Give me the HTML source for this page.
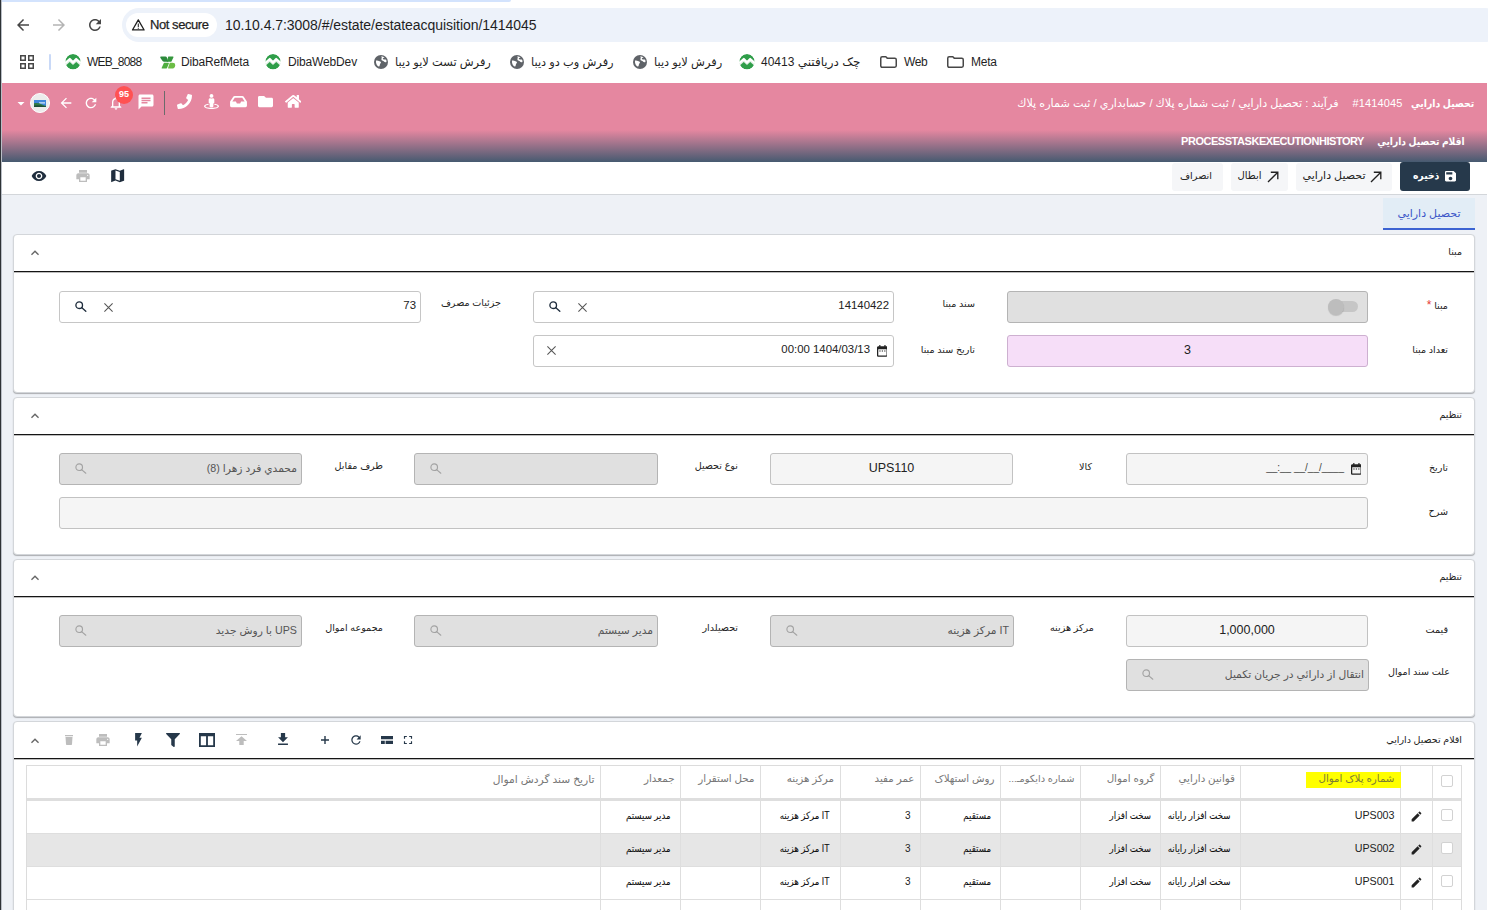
<!DOCTYPE html>
<html lang="fa">
<head>
<meta charset="utf-8">
<title>تحصيل دارايي</title>
<style>
*{box-sizing:border-box;margin:0;padding:0}
html,body{width:1488px;height:910px;overflow:hidden;background:#fff}
body{position:relative;font-family:"Liberation Sans","DejaVu Sans",sans-serif;font-size:11px;color:#222}
.abs{position:absolute}
svg{display:block}
/* ---------- browser chrome ---------- */
#winedge{left:0;top:0;width:2px;height:910px;background:linear-gradient(90deg,#2e3236 0,#2e3236 55%,#b9bec6 55%,#b9bec6 100%);z-index:50}
#tabstrip{left:2px;top:0;width:509px;height:2px;background:#d3e3fd;border-radius:0 0 10px 0}
#urlbar{left:122px;top:8px;width:1380px;height:34px;background:#edf2fa;border-radius:17px}
#chip{left:126px;top:13px;width:90.500px;height:24px;background:#fff;border-radius:12px}
#chip span{position:absolute;left:24px;top:4px;font-size:13px;color:#1f1f1f;letter-spacing:-.44px;white-space:nowrap;-webkit-text-stroke:.25px #1f1f1f}
#url{left:225px;top:17px;font-size:14px;color:#1f1f1f;white-space:nowrap;letter-spacing:-.045px}
.bm{top:54px;font-size:12px;color:#1f1f1f;white-space:nowrap;height:16px;line-height:16px}
.bm.fa{font-size:11.4px;direction:rtl}
/* ---------- app header ---------- */
#hdr{left:2px;top:83px;width:1485px;height:79px;background:linear-gradient(#e587a0 0,#e587a0 47px,#465a70 79px)}
.ht{color:#fff;white-space:nowrap;direction:rtl}
/* ---------- toolbar ---------- */
#tbar{left:2px;top:162px;width:1485px;height:33px;background:#fff;border-bottom:1px solid #d3d6da;box-shadow:0 1px 0 #e2e5e9}
#main{left:2px;top:195px;width:1485px;height:715px;background:#eef1f6}
.btn{top:163px;height:28px;border-radius:3px;background:#f5f6f8;color:#222;font-size:11px;white-space:nowrap;direction:rtl;display:flex;align-items:center;justify-content:center;gap:5px;padding-right:3px}

.btn span{position:relative;top:-2px}
/* ---------- main ---------- */
#tab{left:1383px;top:198px;width:92px;height:32px;background:linear-gradient(#e2edf6 0,#e2edf6 30px,#8fa7e3 30px,#8fa7e3 30.500px,#3b63d2 30.500px,#3b63d2 32px);color:#3b55c8;font-size:11px;direction:rtl;text-align:center;line-height:30px;white-space:nowrap}
.card{left:13px;width:1462px;background:#fff;border:1px solid #d3d6da;border-radius:4px;box-shadow:0 1px 1px rgba(0,0,0,.28)}
.card i{position:absolute;left:0;right:0;top:36px;height:2px;background:linear-gradient(#151515 0,#151515 50%,rgba(17,17,17,.28) 50%,rgba(17,17,17,.28) 100%)}
.ct{right:26px;font-size:9.500px;color:#222;direction:rtl;white-space:nowrap;line-height:14px}
.lb{font-size:9.600px;color:#222;direction:rtl;white-space:nowrap;line-height:14px;text-align:right}
.inp{height:32px;border:1px solid #c6c6c6;border-radius:3px;background:#fff;font-size:11.400px;color:#222;white-space:nowrap;line-height:27px}
.dis{background:#e0e0e0;border-color:#b4b4b4;color:#555;direction:rtl;text-align:right;padding-right:4px;font-size:10.700px;line-height:28px}
.ro{background:#f5f5f5;border-color:#c2c2c2}
.pink{background:#f6def8;border-color:#cdb0d0}
.ctr{text-align:center;line-height:29.500px}
.rt{text-align:right;padding-right:4px}

/* ---------- grid ---------- */
#grid{left:26px;top:765px;width:1436px;height:160px;border:1px solid #dcdcdc;background:#fff;overflow:hidden}
.hrow{left:0;top:0;width:1436px;height:32px}
.hb{left:0;top:32px;width:1436px;height:3px;background:#dedede}
.row{left:0;width:1436px;height:34px;border-bottom:1px solid #dedede}
.alt{background:#e6e6e6}
.vl{top:0;width:1px;height:160px;background:#dedede}
.th{font-size:10.300px;color:#777;direction:rtl;white-space:nowrap;line-height:14px;top:772px}
.td{font-size:10px;color:#111;direction:rtl;white-space:nowrap;line-height:14px;transform:scaleX(.866);transform-origin:100% 50%;-webkit-text-stroke:.08px #111}
.tdl{font-size:10.700px;color:#222;white-space:nowrap;line-height:14px}
.cb{width:12px;height:12px;border:1px solid #d2d2d2;border-radius:2px;background:#fff;left:1441px}
</style>
</head>
<body>
<div class="abs" id="tabstrip"></div>
<div class="abs" id="urlbar"></div>
<div class="abs" id="chip"><span>Not secure</span></div>
<div class="abs" id="url">10.10.4.7:3008/#/estate/estateacquisition/1414045</div>


<!-- nav icons -->
<svg class="abs" style="left:14px;top:16px" width="18" height="18" viewBox="0 0 24 24"><path fill="#474747" d="M20 11H7.830l5.590-5.590L12 4l-8 8 8 8 1.410-1.410L7.830 13H20v-2z"/></svg>
<svg class="abs" style="left:50px;top:16px" width="18" height="18" viewBox="0 0 24 24"><path fill="#b4b4b4" d="M4 11h12.170l-5.590-5.590L12 4l8 8-8 8-1.410-1.410L16.170 13H4v-2z"/></svg>
<svg class="abs" style="left:86px;top:16px" width="18" height="18" viewBox="0 0 24 24"><path fill="#474747" d="M17.650 6.350C16.200 4.900 14.210 4 12 4c-4.420 0-7.990 3.580-7.990 8s3.570 8 7.990 8c3.730 0 6.840-2.550 7.730-6h-2.080c-.82 2.330-3.040 4-5.650 4-3.310 0-6-2.690-6-6s2.690-6 6-6c1.660 0 3.140.69 4.220 1.780L13 11h7V4l-2.350 2.350z"/></svg>
<svg class="abs" style="left:130.700px;top:18.300px" width="14.600" height="13.700" viewBox="0 0 17 16"><path fill="none" stroke="#1f1f1f" stroke-width="1.500" stroke-linejoin="round" d="M8.500 2.200L15.300 14H1.700z"/><path fill="#1f1f1f" d="M7.900 6.500h1.200v4H7.900zM7.900 11.300h1.200v1.300H7.900z"/></svg>
<!-- apps grid -->
<svg class="abs" style="left:20px;top:55px" width="14" height="14" viewBox="0 0 14 14" fill="none" stroke="#474747" stroke-width="1.500"><rect x=".75" y=".75" width="4.500" height="4.500"/><rect x="8.750" y=".75" width="4.500" height="4.500"/><rect x=".75" y="8.750" width="4.500" height="4.500"/><rect x="8.750" y="8.750" width="4.500" height="4.500"/></svg>
<div class="abs" style="left:49px;top:54px;width:2px;height:16px;background:#c9d9f7;border-radius:1px"></div>
<svg class="abs" style="left:65px;top:54px" width="16" height="16" viewBox="0 0 16 16"><circle cx="8" cy="7.800" r="7.700" fill="#2f9e49"/><path d="M.6 10.600L4.800 6.900 8 10l3.200-3.100 4.200 3.700" fill="none" stroke="#dfeee2" stroke-width="1.600" stroke-linejoin="round"/><path d="M.3 9L4.800 5 8 8.200 11.200 5l4.500 4" fill="none" stroke="#fff" stroke-width="2.300" stroke-linejoin="round"/><circle cx="8" cy="7.800" r="8.300" fill="none" stroke="#fff" stroke-width="1.200"/></svg>
<svg class="abs" style="left:265px;top:54px" width="16" height="16" viewBox="0 0 16 16"><circle cx="8" cy="7.800" r="7.700" fill="#2f9e49"/><path d="M.6 10.600L4.800 6.900 8 10l3.200-3.100 4.200 3.700" fill="none" stroke="#dfeee2" stroke-width="1.600" stroke-linejoin="round"/><path d="M.3 9L4.800 5 8 8.200 11.200 5l4.500 4" fill="none" stroke="#fff" stroke-width="2.300" stroke-linejoin="round"/><circle cx="8" cy="7.800" r="8.300" fill="none" stroke="#fff" stroke-width="1.200"/></svg>
<svg class="abs" style="left:739px;top:54px" width="16" height="16" viewBox="0 0 16 16"><circle cx="8" cy="7.800" r="7.700" fill="#2f9e49"/><path d="M.6 10.600L4.800 6.900 8 10l3.200-3.100 4.200 3.700" fill="none" stroke="#dfeee2" stroke-width="1.600" stroke-linejoin="round"/><path d="M.3 9L4.800 5 8 8.200 11.200 5l4.500 4" fill="none" stroke="#fff" stroke-width="2.300" stroke-linejoin="round"/><circle cx="8" cy="7.800" r="8.300" fill="none" stroke="#fff" stroke-width="1.200"/></svg>
<svg class="abs" style="left:158.500px;top:55.500px" width="17" height="13" viewBox="0 0 17 13"><path fill="#2c8a3c" d="M2.200.500h4.300q1 0 1.400 1l1.400 4.300H5.200q-1.300 0-2-1.200L1.300 1.800Q.8.500 2.200.500z"/><path fill="#35973d" d="M9.300.500h4.600q.9 0 .5.900L12.300 5.800H8.400q-.9 0-.5-.9z"/><path fill="#4fae40" d="M5 6.800h4.300q.9 0 .5.900L8 11.900q-.3.700-1.100.700H3.300q-.9 0-.6-.9z"/><path fill="#6cbd45" d="M10.800 6.800h2.700q2.700 0 2.700 2.400 0 3.400-3.700 3.400H9.700q-.9 0-.6-.9z"/></svg>
<svg class="abs" style="left:374px;top:55px" width="14" height="14" viewBox="0 0 24 24"><circle cx="12" cy="12" r="12" fill="#5f6368"/><path fill="#fff" d="M3.500 9.500c1.500-.5 3.500-.3 5 .8 1.300 1 3 .6 3.400 2 .4 1.500-1.400 2.200-1.700 3.600-.3 1.300-.4 3.600-1.600 3.800C6.500 20 4.800 17 4 15c-.6-1.700-.9-3.500-.5-5.500zM12 2.600c1.600-.4 4.400.3 6 1.700-1 .4-2 .3-2.700 1.300-.6.900.4 2 1.500 2.200 1.300.2 2.800-.6 3.900.4.700.7.800 2.400.6 3.800-1.600.7-3.600.2-4.600-1.300-.7-1.100-2.500-.6-3.500-1.700-1.100-1.200-.3-3 .2-4.200.2-.6-.9-1.500-1.400-2.200z"/></svg>
<svg class="abs" style="left:510px;top:55px" width="14" height="14" viewBox="0 0 24 24"><circle cx="12" cy="12" r="12" fill="#5f6368"/><path fill="#fff" d="M3.500 9.500c1.500-.5 3.500-.3 5 .8 1.300 1 3 .6 3.400 2 .4 1.500-1.400 2.200-1.700 3.600-.3 1.300-.4 3.600-1.600 3.800C6.500 20 4.800 17 4 15c-.6-1.700-.9-3.500-.5-5.500zM12 2.600c1.600-.4 4.400.3 6 1.700-1 .4-2 .3-2.700 1.300-.6.900.4 2 1.500 2.200 1.300.2 2.800-.6 3.900.4.700.7.800 2.400.6 3.800-1.600.7-3.600.2-4.600-1.300-.7-1.100-2.500-.6-3.500-1.700-1.100-1.200-.3-3 .2-4.200.2-.6-.9-1.500-1.400-2.200z"/></svg>
<svg class="abs" style="left:633px;top:55px" width="14" height="14" viewBox="0 0 24 24"><circle cx="12" cy="12" r="12" fill="#5f6368"/><path fill="#fff" d="M3.500 9.500c1.500-.5 3.500-.3 5 .8 1.300 1 3 .6 3.400 2 .4 1.500-1.400 2.200-1.700 3.600-.3 1.300-.4 3.600-1.600 3.800C6.500 20 4.800 17 4 15c-.6-1.700-.9-3.500-.5-5.500zM12 2.600c1.600-.4 4.400.3 6 1.700-1 .4-2 .3-2.700 1.300-.6.900.4 2 1.500 2.200 1.300.2 2.800-.6 3.900.4.700.7.800 2.400.6 3.800-1.600.7-3.600.2-4.600-1.300-.7-1.100-2.500-.6-3.500-1.700-1.100-1.200-.3-3 .2-4.200.2-.6-.9-1.500-1.400-2.200z"/></svg>
<svg class="abs" style="left:880px;top:56px" width="17" height="12" viewBox="0 0 17 12"><path fill="none" stroke="#474747" stroke-width="1.500" stroke-linejoin="round" d="M.75 2.200c0-.8.600-1.450 1.400-1.450h3.700l1.600 1.600h7.400c.8 0 1.400.6 1.400 1.400v6.100c0 .8-.6 1.400-1.400 1.400H2.150c-.8 0-1.400-.6-1.400-1.400z"/></svg>
<svg class="abs" style="left:947px;top:56px" width="17" height="12" viewBox="0 0 17 12"><path fill="none" stroke="#474747" stroke-width="1.500" stroke-linejoin="round" d="M.75 2.200c0-.8.600-1.450 1.400-1.450h3.700l1.600 1.600h7.400c.8 0 1.400.6 1.400 1.400v6.100c0 .8-.6 1.400-1.400 1.400H2.150c-.8 0-1.400-.6-1.400-1.400z"/></svg>
<!-- bookmarks -->
<div class="abs bm" style="left:87px;letter-spacing:-.79px">WEB_8088</div>
<div class="abs bm" style="left:181px;letter-spacing:-.19px">DibaRefMeta</div>
<div class="abs bm" style="left:288px;letter-spacing:-.15px">DibaWebDev</div>
<div class="abs bm fa" style="left:395px">رفرش تست لايو ديبا</div>
<div class="abs bm fa" style="left:531px">رفرش وب دو ديبا</div>
<div class="abs bm fa" style="left:654px">رفرش لايو ديبا</div>
<div class="abs bm fa" style="left:761px;font-size:12px">چک دريافتني 40413</div>
<div class="abs bm" style="left:904px;letter-spacing:-.42px">Web</div>
<div class="abs bm" style="left:971px;letter-spacing:-.27px">Meta</div>


<div class="abs" id="hdr"></div>
<!-- header right texts -->
<div class="abs ht" style="right:14px;top:96px;font-size:10.600px;font-weight:bold;line-height:14px;transform:scaleX(.877);transform-origin:100% 50%">تحصيل دارايي</div>
<div class="abs ht" style="right:85.500px;top:96px;font-size:11px;line-height:14px;direction:ltr;letter-spacing:.12px">#1414045</div>
<div class="abs ht" style="right:149.500px;top:96px;font-size:11.200px;line-height:14px">فرآيند : تحصيل دارايي / ثبت شماره پلاك / حسابداري / ثبت شماره پلاك</div>
<div class="abs ht" style="right:23px;top:134px;font-size:10.600px;font-weight:bold;line-height:14px;transform:scaleX(.86);transform-origin:100% 50%">اقلام تحصيل دارايي</div>
<div class="abs ht" style="right:124px;top:134px;font-size:11px;font-weight:bold;line-height:14px;direction:ltr;letter-spacing:-.46px">PROCESSTASKEXECUTIONHISTORY</div>
<!-- header left icons -->
<svg class="abs" style="left:15px;top:98px" width="12" height="12" viewBox="0 0 24 24"><path fill="#fff" d="M5 8l7 7 7-7z"/></svg>
<div class="abs" style="left:30px;top:93px;width:20px;height:20px;border-radius:50%;background:#ececec;border:1px solid #fff;overflow:hidden"><svg style="position:absolute;left:3px;top:5.500px" width="12" height="7" viewBox="0 0 12 7"><rect width="12" height="7" fill="#3f86dc"/><path fill="#cfe3f7" d="M5 2.200h6v1.400H5z"/><path fill="#2f7a45" d="M0 3.200Q4 2.500 8 4.500T12 5.500V7H0z"/><path fill="#1d4f3a" d="M0 5.500Q5 4.800 12 6.500V7H0z"/></svg></div>
<svg class="abs" style="left:58px;top:95px" width="16" height="16" viewBox="0 0 24 24"><path fill="#fff" d="M20 11H7.830l5.590-5.590L12 4l-8 8 8 8 1.410-1.410L7.830 13H20v-2z"/></svg>
<svg class="abs" style="left:83px;top:95px" width="16" height="16" viewBox="0 0 24 24"><path fill="#fff" d="M17.650 6.350C16.200 4.900 14.210 4 12 4c-4.420 0-7.990 3.580-7.990 8s3.570 8 7.990 8c3.730 0 6.840-2.550 7.730-6h-2.080c-.82 2.330-3.040 4-5.650 4-3.310 0-6-2.690-6-6s2.690-6 6-6c1.660 0 3.140.69 4.220 1.780L13 11h7V4l-2.350 2.350z"/></svg>
<svg class="abs" style="left:108px;top:95px" width="16" height="16" viewBox="0 0 24 24"><path fill="#fff" d="M12 22c1.100 0 2-.9 2-2h-4c0 1.100.89 2 2 2zm6-6v-5c0-3.070-1.640-5.640-4.500-6.320V4c0-.83-.67-1.500-1.500-1.500s-1.500.67-1.500 1.500v.68C7.630 5.360 6 7.920 6 11v5l-2 2v1h16v-1l-2-2zm-2 1H8v-6c0-2.480 1.510-4.500 4-4.500s4 2.020 4 4.500v6z"/></svg>
<div class="abs" style="left:115px;top:85.500px;width:18px;height:18px;border-radius:9px;background:#ff5252;color:#fff;font-size:9px;font-weight:bold;text-align:center;line-height:16px">95</div>
<svg class="abs" style="left:137px;top:93px" width="18" height="18" viewBox="0 0 24 24"><path fill="#fff" d="M20 2H4c-1.100 0-1.990.9-1.990 2L2 22l4-4h14c1.100 0 2-.9 2-2V4c0-1.100-.9-2-2-2zM6 9h12v2H6V9zm8 5H6v-2h8v2zm4-6H6V6h12v2z"/></svg>
<div class="abs" style="left:164px;top:91px;width:1px;height:24px;background:#6b6b6b"></div>
<svg class="abs" style="left:177px;top:94px" width="15" height="15" viewBox="0 0 512 512"><path fill="#fff" d="M493.400 24.600l-104-24c-11.300-2.600-22.900 3.300-27.500 13.900l-48 112c-4.200 9.800-1.400 21.300 6.900 28l60.600 49.600c-36 76.700-98.900 140.500-177.200 177.200l-49.600-60.600c-6.800-8.300-18.200-11.100-28-6.900l-112 48C3.900 366.500-2 378.100.6 389.400l24 104C27.100 504.200 36.700 512 48 512c256.100 0 464-207.500 464-464 0-11.200-7.700-20.900-18.600-23.400z"/></svg>
<svg class="abs" style="left:204px;top:94px" width="15" height="15" viewBox="0 0 512 512"><path fill="#fff" d="M367.900 329.760c-4.620 5.300-9.780 10.100-15.900 13.650v22.940c66.520 9.340 112 28.050 112 49.650 0 30.930-93.120 56-208 56S48 446.930 48 416c0-21.600 45.480-40.300 112-49.650v-22.940c-6.120-3.550-11.280-8.350-15.900-13.650C58.870 345.340 0 378.050 0 416c0 53.020 114.620 96 256 96s256-42.980 256-96c0-37.950-58.870-70.660-144.100-86.240zM256 128c35.350 0 64-28.650 64-64S291.350 0 256 0s-64 28.650-64 64 28.650 64 64 64zm-64 192v96c0 17.670 14.330 32 32 32h64c17.670 0 32-14.330 32-32v-96c17.670 0 32-14.330 32-32v-96c0-26.510-21.490-48-48-48h-11.800c-11.070 5.030-23.260 8-36.200 8s-25.130-2.970-36.200-8H208c-26.510 0-48 21.490-48 48v96c0 17.670 14.330 32 32 32z"/></svg>
<svg class="abs" style="left:230px;top:94px" width="17" height="15" viewBox="0 0 576 512"><path fill="#fff" d="M567.938 243.908L462.250 85.374A48.003 48.003 0 0 0 422.311 64H153.689a48 48 0 0 0-39.938 21.374L8.062 243.908A47.994 47.994 0 0 0 0 270.533V400c0 26.510 21.490 48 48 48h480c26.510 0 48-21.490 48-48V270.533a47.994 47.994 0 0 0-8.062-26.625zM162.252 128h251.497l85.333 128H376l-32 64H232l-32-64H76.918l85.334-128z"/></svg>
<svg class="abs" style="left:258px;top:94px" width="15" height="15" viewBox="0 0 512 512"><path fill="#fff" d="M464 128H272l-64-64H48C21.490 64 0 85.490 0 112v288c0 26.510 21.490 48 48 48h416c26.510 0 48-21.490 48-48V176c0-26.510-21.490-48-48-48z"/></svg>
<svg class="abs" style="left:284.500px;top:94px" width="16.500" height="14.700" viewBox="0 0 576 512"><path fill="#fff" d="M280.370 148.260L96 300.110V464a16 16 0 0 0 16 16l112.060-.29a16 16 0 0 0 15.920-16V368a16 16 0 0 1 16-16h64a16 16 0 0 1 16 16v95.640a16 16 0 0 0 16 16.050L464 480a16 16 0 0 0 16-16V300L295.670 148.260a12.190 12.190 0 0 0-15.300 0zM571.600 251.470L488 182.560V44.050a12 12 0 0 0-12-12h-56a12 12 0 0 0-12 12v72.610L318.470 43a48 48 0 0 0-61 0L4.340 251.470a12 12 0 0 0-1.600 16.900l25.500 31A12 12 0 0 0 45.150 301l235.220-193.740a12.190 12.190 0 0 1 15.300 0L530.900 301a12 12 0 0 0 16.900-1.600l25.500-31a12 12 0 0 0-1.700-16.930z"/></svg>

<div class="abs" id="tbar"></div>
<!-- toolbar buttons -->
<div class="abs btn" style="left:1400px;width:70px;top:162px;height:29px;background:#26394b;color:#fff;font-weight:bold;font-size:10.600px;gap:3px"><svg width="11" height="10.500" viewBox="3 3 18 18" preserveAspectRatio="none"><path fill="#fff" d="M17 3H5c-1.110 0-2 .9-2 2v14c0 1.100.89 2 2 2h14c1.100 0 2-.9 2-2V7l-4-4zm-5 16c-1.660 0-3-1.340-3-3s1.340-3 3-3 3 1.340 3 3-1.340 3-3 3zm3-10H5V5h10v4z"/></svg><span style="display:inline-block;transform:scaleX(.875)">ذخيره</span></div>
<div class="abs btn" style="left:1296px;width:96px"><svg width="12" height="12" viewBox="0 0 12 12"><path fill="none" stroke="#222" stroke-width="1.350" d="M1 11L10.800 1.200M3.800 1.200h7v7"/></svg><span style="font-size:11px">تحصيل دارايي</span></div>
<div class="abs btn" style="left:1231px;width:57px"><svg width="12" height="12" viewBox="0 0 12 12"><path fill="none" stroke="#222" stroke-width="1.350" d="M1 11L10.800 1.200M3.800 1.200h7v7"/></svg><span style="font-size:10px">ابطال</span></div>
<div class="abs btn" style="left:1172px;width:51px"><span style="font-size:9.700px">انصراف</span></div>
<!-- toolbar left icons -->
<svg class="abs" style="left:31px;top:168px" width="16" height="16" viewBox="0 0 24 24"><path fill="#1f2d3d" d="M12 4.500C7 4.500 2.730 7.610 1 12c1.730 4.390 6 7.500 11 7.500s9.270-3.110 11-7.500c-1.730-4.390-6-7.500-11-7.500zM12 17c-2.760 0-5-2.240-5-5s2.240-5 5-5 5 2.240 5 5-2.240 5-5 5zm0-8c-1.660 0-3 1.340-3 3s1.340 3 3 3 3-1.340 3-3-1.340-3-3-3z"/></svg>
<svg class="abs" style="left:74.700px;top:168px" width="16" height="16" viewBox="0 0 24 24"><path fill="#bdbdbd" d="M19 8H5c-1.660 0-3 1.340-3 3v6h4v4h12v-4h4v-6c0-1.660-1.340-3-3-3zm-3 11H8v-5h8v5zm3-7c-.55 0-1-.45-1-1s.45-1 1-1 1 .45 1 1-.45 1-1 1zm-1-9H6v4h12V3z"/></svg>
<svg class="abs" style="left:108.900px;top:166.900px" width="17.300" height="17.300" viewBox="0 0 24 24"><path fill="#1f2d3d" d="M20.500 3l-.16.030L15 5.100 9 3 3.360 4.900c-.21.070-.36.250-.36.480V20.500c0 .28.220.5.500.5l.16-.030L9 18.900l6 2.100 5.640-1.900c.21-.070.36-.25.36-.48V3.500c0-.28-.22-.5-.5-.5zM15 19l-6-2.110V5l6 2.110V19z"/></svg>


<div class="abs" id="main"></div>
<div class="abs" id="tab">تحصيل دارايي</div>
<div class="abs card" style="top:234px;height:158.500px"><i></i></div>
<div class="abs ct" style="top:245px">مبنا</div>
<svg class="abs" style="left:27px;top:245px" width="16" height="16" viewBox="0 0 24 24"><path fill="#666" d="M7.410 15.410L12 10.830l4.590 4.580L18 14l-6-6-6 6z"/></svg>
<div class="abs lb" style="right:40px;top:299px">مبنا <span style="color:#e53935;font-size:12px;line-height:10px">*</span></div>
<div class="abs inp dis" style="left:1007px;width:361px;top:291px"></div>
<div class="abs" style="left:1336px;top:301px;width:22px;height:11px;border-radius:6px;background:#c6c6c6"></div><div class="abs" style="left:1328px;top:299px;width:16px;height:16px;border-radius:50%;background:#bdbdbd;box-shadow:0 1px 1px rgba(0,0,0,.15)"></div>
<div class="abs lb" style="right:40px;top:343px">تعداد مبنا</div>
<div class="abs inp pink ctr" style="left:1007px;width:361px;top:335px;font-size:12.500px">3</div>
<div class="abs lb" style="right:513px;top:297px">سند مبنا</div>
<div class="abs inp rt" style="left:533px;width:361px;top:291px">14140422</div>
<svg class="abs" style="left:548.5px;top:300.8px" width="12" height="11" viewBox="0 0 12 11"><circle cx="4.200" cy="4.200" r="3.300" fill="none" stroke="#1f2d3d" stroke-width="1.350"/><path d="M6.600 6.600L10.800 10.200" stroke="#1f2d3d" stroke-width="1.350" stroke-linecap="round"/></svg>
<svg class="abs" style="left:577.7px;top:302.6px" width="9" height="9" viewBox="0 0 9 9"><path d="M.4.400L8.600 8.600M8.600.400L.4 8.600" stroke="#555" stroke-width="1.050" fill="none"/></svg>
<div class="abs lb" style="right:513px;top:343px">تاريخ سند مبنا</div>
<div class="abs inp rt" style="left:533px;width:361px;top:335px;padding-right:23px">00:00 1404/03/13</div>
<svg class="abs" style="left:876.500px;top:345px" width="10.800" height="11.800" viewBox="0 0 12 13"><path fill="#222" d="M2.500 0h1.300v1.200h4.400V0h1.300v1.200h1c.8 0 1.500.7 1.500 1.500v8.800c0 .8-.7 1.500-1.500 1.500h-9C.7 13 0 12.300 0 11.500V2.700c0-.8.7-1.500 1.500-1.500h1zM1.400 4.600v6.600c0 .3.200.5.500.5h8.200c.3 0 .5-.2.500-.5V4.600z"/><path fill="#222" d="M2.600 6h1.400v1.300H2.600zM5.300 6h1.400v1.300H5.300zM8 6h1.400v1.300H8z"/></svg>
<svg class="abs" style="left:546.7px;top:345.700px" width="9" height="9" viewBox="0 0 9 9"><path d="M.4.400L8.600 8.600M8.600.400L.4 8.600" stroke="#555" stroke-width="1.050" fill="none"/></svg>
<div class="abs lb" style="right:987px;top:296px">جزئيات مصرف</div>
<div class="abs inp rt" style="left:59px;width:362px;top:291px">73</div>
<svg class="abs" style="left:74.5px;top:300.8px" width="12" height="11" viewBox="0 0 12 11"><circle cx="4.200" cy="4.200" r="3.300" fill="none" stroke="#1f2d3d" stroke-width="1.350"/><path d="M6.600 6.600L10.800 10.200" stroke="#1f2d3d" stroke-width="1.350" stroke-linecap="round"/></svg>
<svg class="abs" style="left:103.7px;top:302.6px" width="9" height="9" viewBox="0 0 9 9"><path d="M.4.400L8.600 8.600M8.600.400L.4 8.600" stroke="#555" stroke-width="1.050" fill="none"/></svg>
<div class="abs card" style="top:397px;height:157.500px"><i></i></div>
<div class="abs ct" style="top:408px">تنظيم</div>
<svg class="abs" style="left:27px;top:408px" width="16" height="16" viewBox="0 0 24 24"><path fill="#666" d="M7.410 15.410L12 10.830l4.590 4.580L18 14l-6-6-6 6z"/></svg>
<div class="abs lb" style="right:40px;top:461px">تاريخ</div>
<div class="abs inp ro rt" style="left:1126px;width:242px;top:453px;padding-right:23px;font-size:10px"><span dir="ltr" style="unicode-bidi:bidi-override;color:#444">__:__ __/__/____</span></div>
<svg class="abs" style="left:1350.500px;top:463px" width="10.800" height="11.800" viewBox="0 0 12 13"><path fill="#222" d="M2.500 0h1.300v1.200h4.400V0h1.300v1.200h1c.8 0 1.500.7 1.500 1.500v8.800c0 .8-.7 1.500-1.500 1.500h-9C.7 13 0 12.300 0 11.500V2.700c0-.8.7-1.500 1.500-1.500h1zM1.400 4.600v6.600c0 .3.200.5.500.5h8.200c.3 0 .5-.2.500-.5V4.600z"/><path fill="#222" d="M2.600 6h1.400v1.300H2.600zM5.300 6h1.400v1.300H5.300zM8 6h1.400v1.300H8z"/></svg>
<div class="abs lb" style="right:396px;top:460px">كالا</div>
<div class="abs inp ro ctr" style="left:770px;width:243px;top:453px;font-size:12.500px">UPS110</div>
<div class="abs lb" style="right:750px;top:459px">نوع تحصيل</div>
<div class="abs inp dis" style="left:414px;width:244px;top:453px"></div>
<svg class="abs" style="left:429.5px;top:462.8px" width="12" height="11" viewBox="0 0 12 11"><circle cx="4.200" cy="4.200" r="3.300" fill="none" stroke="#a3a3a3" stroke-width="1.150"/><path d="M6.600 6.600L10.800 10.200" stroke="#a3a3a3" stroke-width="1.150" stroke-linecap="round"/></svg>
<div class="abs lb" style="right:1105px;top:459px">طرف مقابل</div>
<div class="abs inp dis" style="left:59px;width:243px;top:453px">محمدي فرد زهرا (8)</div>
<svg class="abs" style="left:74.5px;top:462.8px" width="12" height="11" viewBox="0 0 12 11"><circle cx="4.200" cy="4.200" r="3.300" fill="none" stroke="#a3a3a3" stroke-width="1.150"/><path d="M6.600 6.600L10.800 10.200" stroke="#a3a3a3" stroke-width="1.150" stroke-linecap="round"/></svg>
<div class="abs lb" style="right:40px;top:505px">شرح</div>
<div class="abs inp ro" style="left:59px;width:1309px;top:497px"></div>
<div class="abs card" style="top:559px;height:157.500px"><i></i></div>
<div class="abs ct" style="top:570px">تنظيم</div>
<svg class="abs" style="left:27px;top:570px" width="16" height="16" viewBox="0 0 24 24"><path fill="#666" d="M7.410 15.410L12 10.830l4.590 4.580L18 14l-6-6-6 6z"/></svg>
<div class="abs lb" style="right:40px;top:623px">قيمت</div>
<div class="abs inp ro ctr" style="left:1126px;width:242px;top:615px;font-size:12.500px">1,000,000</div>
<div class="abs lb" style="right:394px;top:621px">مركز هزينه</div>
<div class="abs inp dis" style="left:770px;width:244px;top:615px">IT مركز هزينه</div>
<svg class="abs" style="left:785.5px;top:624.8px" width="12" height="11" viewBox="0 0 12 11"><circle cx="4.200" cy="4.200" r="3.300" fill="none" stroke="#a3a3a3" stroke-width="1.150"/><path d="M6.600 6.600L10.800 10.200" stroke="#a3a3a3" stroke-width="1.150" stroke-linecap="round"/></svg>
<div class="abs lb" style="right:750px;top:621px">تحصيلدار</div>
<div class="abs inp dis" style="left:414px;width:244px;top:615px">مدير سيستم</div>
<svg class="abs" style="left:429.5px;top:624.8px" width="12" height="11" viewBox="0 0 12 11"><circle cx="4.200" cy="4.200" r="3.300" fill="none" stroke="#a3a3a3" stroke-width="1.150"/><path d="M6.600 6.600L10.800 10.200" stroke="#a3a3a3" stroke-width="1.150" stroke-linecap="round"/></svg>
<div class="abs lb" style="right:1105px;top:621px">مجموعه اموال</div>
<div class="abs inp dis" style="left:59px;width:243px;top:615px">UPS با روش جديد</div>
<svg class="abs" style="left:74.5px;top:624.8px" width="12" height="11" viewBox="0 0 12 11"><circle cx="4.200" cy="4.200" r="3.300" fill="none" stroke="#a3a3a3" stroke-width="1.150"/><path d="M6.600 6.600L10.800 10.200" stroke="#a3a3a3" stroke-width="1.150" stroke-linecap="round"/></svg>
<div class="abs lb" style="right:38px;top:665px">علت سند اموال</div>
<div class="abs inp dis" style="left:1126px;width:243px;top:659px">انتقال از دارائي در جريان تكميل</div>
<svg class="abs" style="left:1141.5px;top:668.8px" width="12" height="11" viewBox="0 0 12 11"><circle cx="4.200" cy="4.200" r="3.300" fill="none" stroke="#a3a3a3" stroke-width="1.150"/><path d="M6.600 6.600L10.800 10.200" stroke="#a3a3a3" stroke-width="1.150" stroke-linecap="round"/></svg>
<div class="abs card" style="top:721px;height:200px"><i></i></div>
<div class="abs ct" style="top:733px">اقلام تحصيل دارايي</div>
<svg class="abs" style="left:27px;top:733px" width="16" height="16" viewBox="0 0 24 24"><path fill="#666" d="M7.410 15.410L12 10.830l4.590 4.580L18 14l-6-6-6 6z"/></svg>
<!-- grid toolbar -->
<svg class="abs" style="left:65px;top:735px" width="8" height="10" viewBox="0 0 8 10"><path fill="#bdbdbd" d="M0 0h8v1.300H0zM.5 2h7l-.5 7.300c0 .4-.3.700-.7.700H1.700c-.4 0-.7-.3-.7-.7z"/></svg>
<svg class="abs" style="left:95px;top:732px" width="16" height="16" viewBox="0 0 24 24"><path fill="#bdbdbd" d="M19 8H5c-1.660 0-3 1.340-3 3v6h4v4h12v-4h4v-6c0-1.660-1.340-3-3-3zm-3 11H8v-5h8v5zm3-7c-.55 0-1-.45-1-1s.45-1 1-1 1 .45 1 1-.45 1-1 1zm-1-9H6v4h12V3z"/></svg>
<svg class="abs" style="left:135px;top:733px" width="7" height="13.500" viewBox="0 0 10 20"><path fill="#26384a" d="M0 0h10L6.500 7H10L3 20V11H0z"/></svg>
<svg class="abs" style="left:165.500px;top:733px" width="14" height="14" viewBox="0 0 512 512"><path fill="#26384a" d="M487.976 0H24.028C2.710 0-8.047 25.866 7.058 40.971L192 225.941V432c0 7.831 3.821 15.170 10.237 19.662l80 55.980C298.020 518.690 320 507.493 320 487.980V225.941l184.947-184.970C520.021 25.896 509.338 0 487.976 0z"/></svg>
<svg class="abs" style="left:199px;top:733px" width="16" height="14" viewBox="0 0 16 14"><path fill="#26384a" fill-rule="evenodd" d="M0 0h16v14H0zM1.800 3.200v9h5.300v-9zM8.900 3.200v9h5.300v-9z"/></svg>
<svg class="abs" style="left:235.500px;top:734px" width="11" height="11" viewBox="0 0 14 14"><path fill="#bdbdbd" d="M0 0h14v1.200H0zM7 3l7 6H9.800v5H4.200V9H0z"/></svg>
<svg class="abs" style="left:278px;top:733px" width="10" height="12" viewBox="0 0 14 17"><path fill="#26384a" d="M4 0h6v6h4l-7 7-7-7h4zM0 15h14v2H0z"/></svg>
<svg class="abs" style="left:321px;top:736px" width="8" height="8" viewBox="0 0 8 8"><path fill="#26384a" d="M3.300 0h1.400v3.300H8v1.400H4.700V8H3.300V4.700H0V3.300h3.300z"/></svg>
<svg class="abs" style="left:349px;top:733px" width="14" height="14" viewBox="0 0 24 24"><path fill="#26384a" d="M17.650 6.350C16.200 4.900 14.210 4 12 4c-4.420 0-7.990 3.580-7.990 8s3.570 8 7.990 8c3.730 0 6.840-2.550 7.730-6h-2.080c-.82 2.330-3.040 4-5.650 4-3.310 0-6-2.690-6-6s2.690-6 6-6c1.660 0 3.140.69 4.220 1.780L13 11h7V4l-2.350 2.350z"/></svg>
<svg class="abs" style="left:380.500px;top:736px" width="12" height="8" viewBox="0 0 12 8"><path fill="#26384a" d="M0 0h12v3.300H0zM0 4.700h3.800V8H0zM4.600 4.700H12V8H4.600z"/></svg>
<svg class="abs" style="left:401px;top:733px" width="14" height="14" viewBox="0 0 24 24"><path fill="#26384a" d="M7 14H5v5h5v-2H7v-3zm-2-4h2V7h3V5H5v5zm12 7h-3v2h5v-5h-2v3zM14 5v2h3v3h2V5h-5z"/></svg>
<!-- grid -->
<div class="abs" id="grid">
<div class="abs hrow"></div>
<div class="abs row" style="top:34px;height:33.500px"></div>
<div class="abs row alt" style="top:67.500px;height:33px"></div>
<div class="abs row" style="top:100.500px;height:33px"></div>
<div class="abs row" style="top:133.500px"></div>
<div class="abs hb"></div>
<div class="abs vl" style="left:1405.0px"></div>
<div class="abs vl" style="left:1373.0px"></div>
<div class="abs vl" style="left:1213.0px"></div>
<div class="abs vl" style="left:1133.0px"></div>
<div class="abs vl" style="left:1053.0px"></div>
<div class="abs vl" style="left:973.0px"></div>
<div class="abs vl" style="left:893.0px"></div>
<div class="abs vl" style="left:813.0px"></div>
<div class="abs vl" style="left:733.0px"></div>
<div class="abs vl" style="left:653.0px"></div>
<div class="abs vl" style="left:573.0px"></div>
</div>
<div class="abs" style="left:1306px;top:772px;width:95px;height:16px;background:#ffff00"></div>
<div class="abs th" style="right:93.5px;color:#7c7c33">شماره پلاک اموال</div>
<div class="abs th" style="right:253px">قوانين دارايي</div>
<div class="abs th" style="right:333.5px">گروه اموال</div>
<div class="abs th" style="right:413.5px;font-size:9.800px">شماره دايكومـ...</div>
<div class="abs th" style="right:493.5px">روش استهلاک</div>
<div class="abs th" style="right:573.5px">عمر مفيد</div>
<div class="abs th" style="right:654px">مركز هزينه</div>
<div class="abs th" style="right:733.5px">محل استقرار</div>
<div class="abs th" style="right:813.5px">جمعدار</div>
<div class="abs th" style="right:893.5px;font-size:10.700px">تاريخ سند گردش اموال</div>
<div class="abs cb" style="top:774.500px"></div>
<div class="abs cb" style="top:809px"></div>
<svg class="abs" style="left:1410px;top:810px" width="13" height="13" viewBox="0 0 24 24"><path fill="#222" d="M3 17.250V21h3.750L17.810 9.940l-3.750-3.750L3 17.250zM20.710 7.040c.39-.39.39-1.020 0-1.410l-2.340-2.340c-.39-.39-1.020-.39-1.410 0l-1.830 1.830 3.750 3.750 1.830-1.830z"/></svg>
<div class="abs tdl" style="right:93.5px;top:808px">UPS003</div>
<div class="abs td" style="right:257.5px;top:809px">سخت افزار رايانه</div>
<div class="abs td" style="right:337px;top:809px">سخت افزار</div>
<div class="abs td" style="right:497px;top:809px">مستقيم</div>
<div class="abs tdl" style="right:577.5px;top:809px;font-size:10px">3</div>
<div class="abs td" style="right:658.5px;top:809px">IT مركز هزينه</div>
<div class="abs td" style="right:817.5px;top:809px">مدير سيستم</div>
<div class="abs cb" style="top:842px"></div>
<svg class="abs" style="left:1410px;top:843px" width="13" height="13" viewBox="0 0 24 24"><path fill="#222" d="M3 17.250V21h3.750L17.810 9.940l-3.750-3.750L3 17.250zM20.710 7.040c.39-.39.39-1.020 0-1.410l-2.340-2.340c-.39-.39-1.020-.39-1.410 0l-1.830 1.830 3.750 3.750 1.830-1.830z"/></svg>
<div class="abs tdl" style="right:93.5px;top:841px">UPS002</div>
<div class="abs td" style="right:257.5px;top:842px">سخت افزار رايانه</div>
<div class="abs td" style="right:337px;top:842px">سخت افزار</div>
<div class="abs td" style="right:497px;top:842px">مستقيم</div>
<div class="abs tdl" style="right:577.5px;top:842px;font-size:10px">3</div>
<div class="abs td" style="right:658.5px;top:842px">IT مركز هزينه</div>
<div class="abs td" style="right:817.5px;top:842px">مدير سيستم</div>
<div class="abs cb" style="top:875px"></div>
<svg class="abs" style="left:1410px;top:876px" width="13" height="13" viewBox="0 0 24 24"><path fill="#222" d="M3 17.250V21h3.750L17.810 9.940l-3.750-3.750L3 17.250zM20.710 7.040c.39-.39.39-1.020 0-1.410l-2.340-2.340c-.39-.39-1.020-.39-1.410 0l-1.830 1.830 3.750 3.750 1.830-1.830z"/></svg>
<div class="abs tdl" style="right:93.5px;top:874px">UPS001</div>
<div class="abs td" style="right:257.5px;top:875px">سخت افزار رايانه</div>
<div class="abs td" style="right:337px;top:875px">سخت افزار</div>
<div class="abs td" style="right:497px;top:875px">مستقيم</div>
<div class="abs tdl" style="right:577.5px;top:875px;font-size:10px">3</div>
<div class="abs td" style="right:658.5px;top:875px">IT مركز هزينه</div>
<div class="abs td" style="right:817.5px;top:875px">مدير سيستم</div>
<div class="abs" id="winedge"></div>
</body>
</html>
